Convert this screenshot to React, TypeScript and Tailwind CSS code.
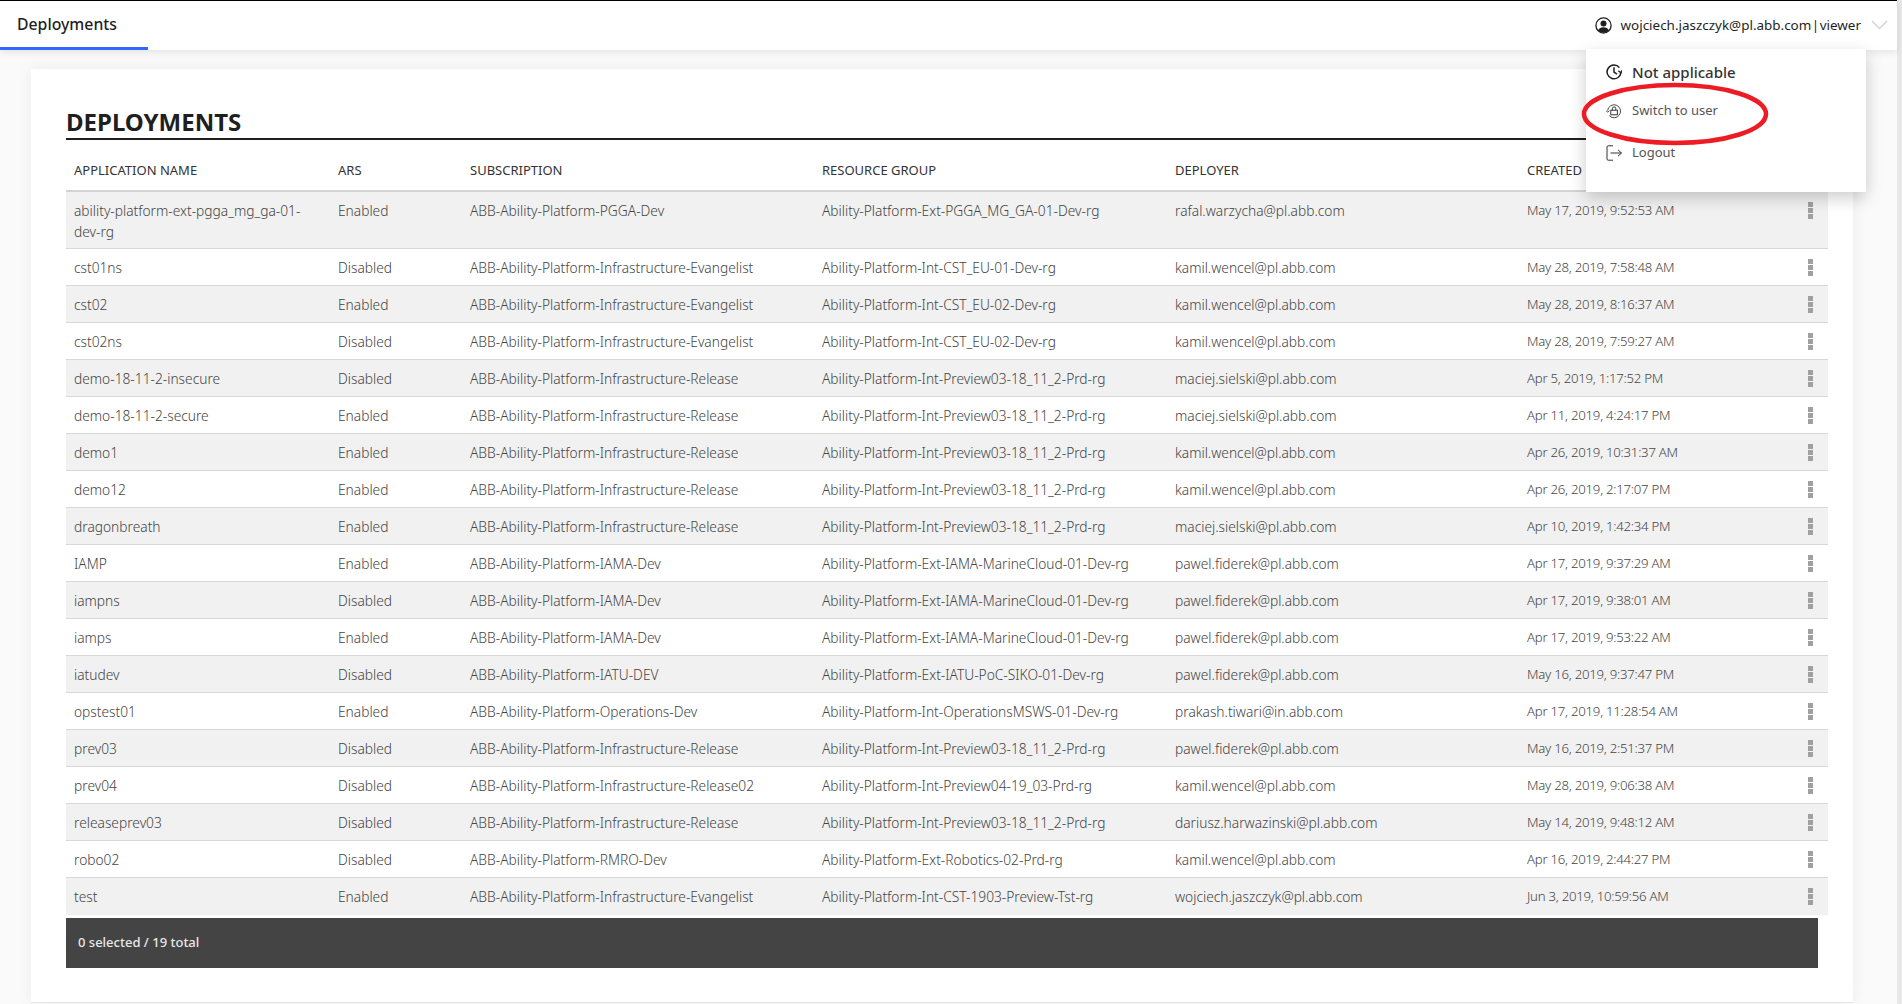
import React from "react"

const rows = [
  ["ability-platform-ext-pgga_mg_ga-01-dev-rg", "Enabled", "ABB-Ability-Platform-PGGA-Dev", "Ability-Platform-Ext-PGGA_MG_GA-01-Dev-rg", "rafal.warzycha@pl.abb.com", "May 17, 2019, 9:52:53 AM"],
  ["cst01ns", "Disabled", "ABB-Ability-Platform-Infrastructure-Evangelist", "Ability-Platform-Int-CST_EU-01-Dev-rg", "kamil.wencel@pl.abb.com", "May 28, 2019, 7:58:48 AM"],
  ["cst02", "Enabled", "ABB-Ability-Platform-Infrastructure-Evangelist", "Ability-Platform-Int-CST_EU-02-Dev-rg", "kamil.wencel@pl.abb.com", "May 28, 2019, 8:16:37 AM"],
  ["cst02ns", "Disabled", "ABB-Ability-Platform-Infrastructure-Evangelist", "Ability-Platform-Int-CST_EU-02-Dev-rg", "kamil.wencel@pl.abb.com", "May 28, 2019, 7:59:27 AM"],
  ["demo-18-11-2-insecure", "Disabled", "ABB-Ability-Platform-Infrastructure-Release", "Ability-Platform-Int-Preview03-18_11_2-Prd-rg", "maciej.sielski@pl.abb.com", "Apr 5, 2019, 1:17:52 PM"],
  ["demo-18-11-2-secure", "Enabled", "ABB-Ability-Platform-Infrastructure-Release", "Ability-Platform-Int-Preview03-18_11_2-Prd-rg", "maciej.sielski@pl.abb.com", "Apr 11, 2019, 4:24:17 PM"],
  ["demo1", "Enabled", "ABB-Ability-Platform-Infrastructure-Release", "Ability-Platform-Int-Preview03-18_11_2-Prd-rg", "kamil.wencel@pl.abb.com", "Apr 26, 2019, 10:31:37 AM"],
  ["demo12", "Enabled", "ABB-Ability-Platform-Infrastructure-Release", "Ability-Platform-Int-Preview03-18_11_2-Prd-rg", "kamil.wencel@pl.abb.com", "Apr 26, 2019, 2:17:07 PM"],
  ["dragonbreath", "Enabled", "ABB-Ability-Platform-Infrastructure-Release", "Ability-Platform-Int-Preview03-18_11_2-Prd-rg", "maciej.sielski@pl.abb.com", "Apr 10, 2019, 1:42:34 PM"],
  ["IAMP", "Enabled", "ABB-Ability-Platform-IAMA-Dev", "Ability-Platform-Ext-IAMA-MarineCloud-01-Dev-rg", "pawel.fiderek@pl.abb.com", "Apr 17, 2019, 9:37:29 AM"],
  ["iampns", "Disabled", "ABB-Ability-Platform-IAMA-Dev", "Ability-Platform-Ext-IAMA-MarineCloud-01-Dev-rg", "pawel.fiderek@pl.abb.com", "Apr 17, 2019, 9:38:01 AM"],
  ["iamps", "Enabled", "ABB-Ability-Platform-IAMA-Dev", "Ability-Platform-Ext-IAMA-MarineCloud-01-Dev-rg", "pawel.fiderek@pl.abb.com", "Apr 17, 2019, 9:53:22 AM"],
  ["iatudev", "Disabled", "ABB-Ability-Platform-IATU-DEV", "Ability-Platform-Ext-IATU-PoC-SIKO-01-Dev-rg", "pawel.fiderek@pl.abb.com", "May 16, 2019, 9:37:47 PM"],
  ["opstest01", "Enabled", "ABB-Ability-Platform-Operations-Dev", "Ability-Platform-Int-OperationsMSWS-01-Dev-rg", "prakash.tiwari@in.abb.com", "Apr 17, 2019, 11:28:54 AM"],
  ["prev03", "Disabled", "ABB-Ability-Platform-Infrastructure-Release", "Ability-Platform-Int-Preview03-18_11_2-Prd-rg", "pawel.fiderek@pl.abb.com", "May 16, 2019, 2:51:37 PM"],
  ["prev04", "Disabled", "ABB-Ability-Platform-Infrastructure-Release02", "Ability-Platform-Int-Preview04-19_03-Prd-rg", "kamil.wencel@pl.abb.com", "May 28, 2019, 9:06:38 AM"],
  ["releaseprev03", "Disabled", "ABB-Ability-Platform-Infrastructure-Release", "Ability-Platform-Int-Preview03-18_11_2-Prd-rg", "dariusz.harwazinski@pl.abb.com", "May 14, 2019, 9:48:12 AM"],
  ["robo02", "Disabled", "ABB-Ability-Platform-RMRO-Dev", "Ability-Platform-Ext-Robotics-02-Prd-rg", "kamil.wencel@pl.abb.com", "Apr 16, 2019, 2:44:27 PM"],
  ["test", "Enabled", "ABB-Ability-Platform-Infrastructure-Evangelist", "Ability-Platform-Int-CST-1903-Preview-Tst-rg", "wojciech.jaszczyk@pl.abb.com", "Jun 3, 2019, 10:59:56 AM"],
]

const headers = ["APPLICATION NAME", "ARS", "SUBSCRIPTION", "RESOURCE GROUP", "DEPLOYER", "CREATED"]

function Kebab() {
  return (
    <div className="flex flex-col gap-px w-[5px] ml-[18px]">
      <span className="h-[5px] bg-[#a0a0a0]" />
      <span className="h-[5px] bg-[#a0a0a0]" />
      <span className="h-[5px] bg-[#a0a0a0]" />
    </div>
  )
}

function UserIcon() {
  return (
    <svg width="17" height="17" viewBox="0 0 17 17" fill="none">
      <circle cx="8.5" cy="8.5" r="7.6" stroke="#1f1f1f" strokeWidth="1.3" />
      <circle cx="8.5" cy="6.4" r="3" fill="#1f1f1f" />
      <path d="M3 13.6c1-2.6 3.2-3.4 5.5-3.4s4.500.8 5.500 3.400c-1.400 1.400-3.400 2.200-5.500 2.200s-4.100-.8-5.500-2.200z" fill="#1f1f1f" />
    </svg>
  )
}

function ClockIcon() {
  return (
    <svg width="16" height="16" viewBox="0 0 16 16" fill="none" stroke="#1f1f1f" strokeWidth="1.5">
      <path d="M13.400 3.600A6.900 6.900 0 1 0 14.900 8" />
      <path d="M12.300 6.800l2.500 2 1.200-2.500" strokeWidth="1.200" />
      <path d="M8 3.200V8l3 2.200" />
    </svg>
  )
}

function SwitchIcon() {
  return (
    <svg width="16" height="16" viewBox="0 0 16 16" fill="none" stroke="#333" strokeWidth="0.9">
      <path d="M1.600 7.500A6.500 6.500 0 1 1 3.300 12.700" />
      <path d="M0 7.500l1.600 1.700 1.800-1.500" />
      <rect x="4.800" y="7.200" width="6.600" height="4.600" strokeWidth="1" />
      <path d="M6.400 7.200V5.600a1.700 1.700 0 0 1 3.400 0v1.600" strokeWidth="1" />
    </svg>
  )
}

function LogoutIcon() {
  return (
    <svg width="16" height="16" viewBox="0 0 16 16" fill="none" stroke="#333" strokeWidth="1">
      <path d="M7 .8H2.200A1.200 1.200 0 0 0 1 2v12a1.200 1.200 0 0 0 1.200 1.200H7" />
      <path d="M4.500 8h11M12 4.800L15.500 8 12 11.200" />
    </svg>
  )
}

export default function App() {
  return (
    <div className="flex h-screen w-full overflow-hidden bg-[#fafafa] font-['Noto_Sans',sans-serif]">
      <div className="relative flex-1 min-w-0">
        <header className="relative z-10 flex h-[50px] items-center justify-between border-t border-black bg-white shadow-[0_2px_8px_rgba(0,0,0,0.1)]">
          <div className="flex h-full w-[148px] items-center border-b-[3px] border-[#3366ff] pl-[17px] pt-[1px] text-[15.8px] font-medium text-[#1f1f1f]">
            Deployments
          </div>
          <div className="flex items-center pr-[9px]">
            <UserIcon />
            <span className="ml-[9px] text-[13.45px] text-[#1f1f1f] [word-spacing:-3px]">wojciech.jaszczyk@pl.abb.com | viewer</span>
            <svg className="ml-[10px]" width="17" height="10" viewBox="0 0 17 10" fill="none" stroke="#d4d4d4" strokeWidth="1.500">
              <path d="M1 1l7.500 7.500L16 1" />
            </svg>
          </div>
        </header>

        <main className="ml-[31px] mt-[19px] h-[934px] w-[1822px] border-b border-[#e6e6e6] bg-white pl-[35px] pr-[25px] shadow-[0_0_16px_rgba(0,0,0,0.06)]">
          <h1 className="h-[71px] border-b-2 border-[#1f1f1f] pt-[38px] text-[24px] leading-[30px] font-bold text-[#1f1f1f]">DEPLOYMENTS</h1>
          <table className="w-full table-fixed border-collapse text-[13.75px] leading-[21px] font-light text-[#444]">
            <thead>
              <tr className="h-[51px] border-b-2 border-[#d0d4d8]">
                {headers.map((h, i) => (
                  <th key={h} className={`pr-[7px] pt-[10px] text-left text-[13px] font-normal text-[#333] ${i === 0 ? "pl-[8px]" : "pl-[7px]"} ${["w-[265px]", "w-[132px]", "w-[352px]", "w-[353px]", "w-[352px]", "w-[270px]"][i]}`}>
                    {h}
                  </th>
                ))}
                <th />
              </tr>
            </thead>
            <tbody>
              {rows.map((r, i) => (
                <tr key={r[0]} className={`border-b border-[#d8d8d8] last:border-b-0 ${i % 2 === 0 ? "bg-[#f1f1f1]" : "bg-white"}`}>
                  {r.map((c, j) => (
                    <td key={j} className={`h-[37px] pt-[8px] pb-[6px] align-top ${j === 0 ? "pl-[8px] pr-[14px]" : "px-[7px]"} ${j === 5 ? "text-[13.2px] tracking-[-0.25px]" : ""}`}>{c}</td>
                  ))}
                  <td className="pt-[10px] align-top"><Kebab /></td>
                </tr>
              ))}
            </tbody>
          </table>
          <div className="mt-[3px] mr-[10px] flex h-[50px] items-center bg-[#444444] pl-[12px] text-[13px] font-medium text-[#e8e8e8]">
            0 selected / 19 total
          </div>
        </main>

        <div className="absolute left-[1586px] top-[49px] z-20 h-[143px] w-[280px] bg-white pl-[20px] pt-[11px] shadow-[0_6px_16px_rgba(0,0,0,0.2)]">
          <div className="flex h-[24px] items-center gap-[10px] text-[15px] font-medium text-[#333]">
            <ClockIcon />Not applicable
          </div>
          <div className="mt-[15px] flex h-[24px] items-center gap-[10px] text-[13px] text-[#555]">
            <SwitchIcon />Switch to user
          </div>
          <div className="mt-[18px] flex h-[24px] items-center gap-[10px] text-[13px] text-[#555]">
            <LogoutIcon />Logout
          </div>
          <svg className="absolute left-[-6px] top-[31px]" width="190" height="68" viewBox="0 0 190 68" fill="none">
            <ellipse cx="95" cy="34" rx="91" ry="29" stroke="#ed1c24" strokeWidth="4.500" />
          </svg>
        </div>
      </div>
      <div className="w-[5px] shrink-0 bg-[#e8e8e8]" />
    </div>
  )
}
